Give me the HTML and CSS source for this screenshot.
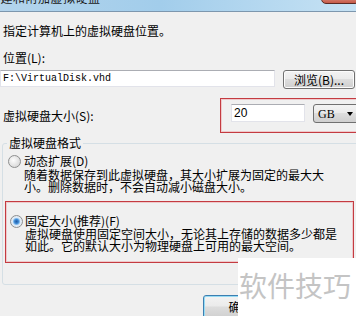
FILE: index.html
```html
<!DOCTYPE html>
<html lang="zh-CN">
<head>
    <meta charset="UTF-8">
    <meta name="viewport" content="width=device-width, initial-scale=1.0">
    <title>创建和附加虚拟硬盘</title>
    <link rel="stylesheet" href="styles.css">
</head>
<body>
    <div class="titlebar">
        <span class="title">创建和附加虚拟硬盘</span>
        <span class="close"></span>
    </div>

    <p class="intro">指定计算机上的虚拟硬盘位置。</p>
    <p class="label">位置(L):</p>

    <div class="path-row">
        <div class="field path">F:\VirtualDisk.vhd</div>
        <div class="btn browse">浏览(B)...</div>
    </div>

    <div class="size-row">
        <span class="size-label">虚拟硬盘大小(S):</span>
        <div class="size-box">
            <div class="field size">20</div>
            <div class="select">GB<span class="arrow"></span></div>
        </div>
    </div>

    <fieldset class="format">
        <legend>虚拟硬盘格式</legend>

        <div class="option">
            <div class="radio-row">
                <span class="radio"></span>
                <span>动态扩展(D)</span>
            </div>
            <p class="desc">随着数据保存到此虚拟硬盘，其大小扩展为固定的最大大小。删除数据时，不会自动减小磁盘大小。</p>
        </div>

        <div class="option picked">
            <div class="radio-row">
                <span class="radio checked"></span>
                <span>固定大小(推荐)(F)</span>
            </div>
            <p class="desc">虚拟硬盘使用固定空间大小，无论其上存储的数据多少都是如此。它的默认大小为物理硬盘上可用的最大空间。</p>
        </div>
    </fieldset>

    <div class="btn ok">确定</div>

    <div class="watermark">软件技巧</div>
</body>
</html>
```

FILE: styles.css
```css
/* General Styles */
* {
    box-sizing: border-box;
}

body {
    margin: 0;
    width: 356px;
    height: 316px;
    overflow: hidden;
    position: relative;
    background: #f0f0f0;
    color: #000;
    font-family: "Noto Sans CJK SC", sans-serif;
    font-size: 12px;
    line-height: 14px;
}

p {
    margin: 0;
}

/* Title bar (mostly scrolled off the top) */
.titlebar {
    position: relative;
    height: 12px;
    overflow: hidden;
    border-bottom: 1px solid #7d97ae;
    background: linear-gradient(to right, #b3d4ec, #a2cdeb 45%, #c6e2f4);
}

.title {
    display: block;
    margin: -9px 0 0 -12px;
    color: #1a1a1a;
    letter-spacing: 0.5px;
    white-space: nowrap;
}

.close {
    position: absolute;
    top: -6px;
    right: -4px;
    width: 39px;
    height: 10px;
    border: 1px solid #5b2b24;
    border-radius: 0 0 5px 5px;
    background: linear-gradient(to bottom, #e0a090, #c65a48);
}

/* Location */
.intro {
    margin: 12px 0 0 3px;
}

.label {
    margin: 13px 0 0 3px;
}

.path-row {
    display: flex;
    align-items: flex-start;
    gap: 8px;
    margin-top: 5px;
}

.field {
    background: #fff;
    border: 1px solid #e2e3ea;
    border-top-color: #abadb3;
    white-space: nowrap;
}

.path {
    width: 275px;
    height: 17px;
    padding-left: 2px;
    font-family: "Liberation Mono", monospace;
    font-size: 10px;
    line-height: 15px;
}

.btn {
    display: flex;
    justify-content: center;
    align-items: center;
    border: 1px solid #707070;
    border-radius: 3px;
    background: linear-gradient(to bottom, #f3f3f3, #ebebeb 45%, #dddddd 50%, #cfcfcf);
    box-shadow: inset 0 0 0 1px #fcfcfc;
    white-space: nowrap;
}

.browse {
    width: 72px;
    height: 19px;
}

/* Size */
.size-row {
    display: flex;
    align-items: center;
    margin-top: 9px;
}

.size-label {
    flex: none;
    width: 217px;
    margin-left: 3px;
}

.size-box {
    flex: none;
    display: flex;
    align-items: flex-start;
    width: 150px;
    height: 35px;
    padding: 5px 0 0 10px;
    border: 1px solid #c43b41;
    box-shadow: inset 0 0 0 1px #efc9cb;
}

.size {
    width: 74px;
    height: 18px;
    padding-left: 2px;
    font-family: "Liberation Sans", sans-serif;
    font-size: 12px;
    line-height: 16px;
}

.select {
    display: flex;
    align-items: center;
    width: 48px;
    height: 19px;
    margin-left: 8px;
    padding-left: 4px;
    border: 1px solid #707070;
    border-radius: 3px;
    background: linear-gradient(to bottom, #f3f3f3, #ebebeb 45%, #dddddd 50%, #cfcfcf);
    font-family: "Liberation Serif", serif;
    font-size: 12px;
}

.arrow {
    margin-left: 12px;
    border-left: 3.5px solid transparent;
    border-right: 3.5px solid transparent;
    border-top: 4px solid #000;
}

/* Format group */
.format {
    width: 400px;
    margin: 3px 0 0 2px;
    padding: 0 0 21px 4px;
    border: 1px solid #d5dfe5;
    border-radius: 3px;
    min-width: 0;
}

.format legend {
    padding: 0 2px;
}

.option {
    margin-top: 4px;
}

.radio-row {
    display: flex;
    align-items: center;
    gap: 3px;
}

.radio {
    flex: none;
    width: 13px;
    height: 13px;
    margin-left: 1px;
    border: 1px solid #8e8f8f;
    border-radius: 50%;
    background: radial-gradient(circle at 40% 40%, #fdfdfd, #dcdcdc 70%, #cbcbcb);
}

.radio.checked {
    background: radial-gradient(circle at 50% 50%, #1f5da6 0, #3d86d0 2px, #7cb9ee 3px, #dfeaf5 4px, #e8edf2 100%);
}

.desc {
    width: 306px;
    margin: 1px 0 0 17px;
    line-height: 12px;
}

.option.picked {
    width: 349px;
    margin: 8px 0 0 -2px;
    padding: 12px 0 10px 3px;
    border: 1px solid #c43b41;
    box-shadow: inset 0 0 0 1px #efc9cb;
}

.picked .radio-row {
    gap: 2px;
}

.picked .desc {
    width: 318px;
    margin: 0 0 0 16px;
}

/* Bottom button */
.ok {
    width: 75px;
    height: 24px;
    margin: 10px 0 0 203px;
    border-color: #3c7fb1;
    box-shadow: inset 0 0 0 1px #97dcf5;
}

/* Watermark over the corner */
.watermark {
    position: absolute;
    top: 258px;
    left: 238px;
    right: 0;
    bottom: 0;
    padding: 13px 0 0 1px;
    background: #fff;
    color: #c4c4c4;
    font-size: 28px;
    line-height: 28px;
    white-space: nowrap;
}
```
